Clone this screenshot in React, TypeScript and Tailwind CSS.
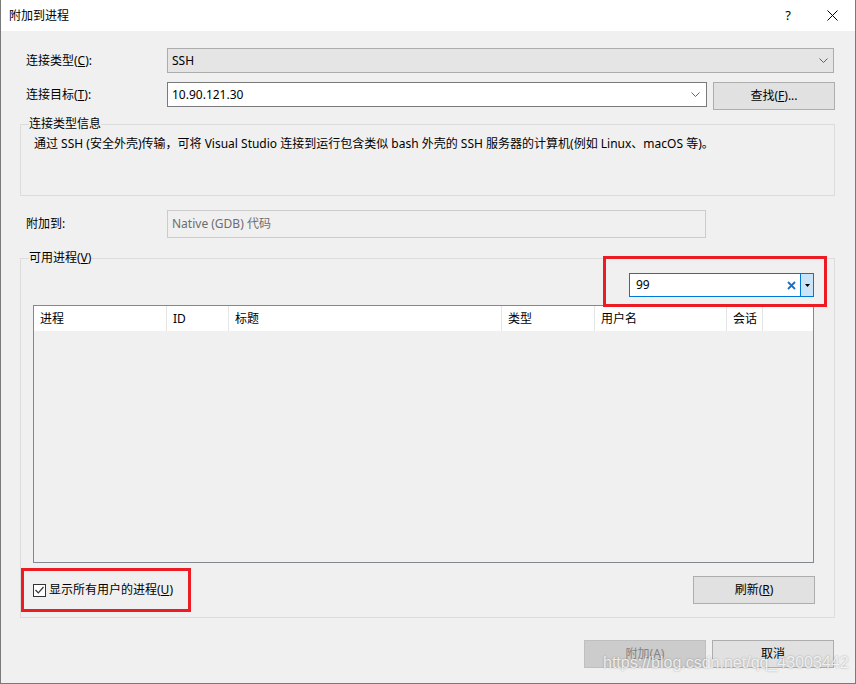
import React from "react"

const font = "font-['Noto_Sans','Noto_Sans_CJK_SC',sans-serif]"

function Chevron() {
    return (
        <svg width="9" height="5" viewBox="0 0 9 5" className="shrink-0">
            <path d="M0.5 0.5 L4.5 4.5 L8.5 0.5" fill="none" stroke="#606060" strokeWidth="1" />
        </svg>
    )
}

function Btn({ children, disabled }: { children: React.ReactNode; disabled?: boolean }) {
    return (
        <div
            className={
                disabled
                    ? "w-[122px] h-[28px] flex items-center justify-center border border-[#bfbfbf] bg-[#cccccc] text-[#838383]"
                    : "w-[122px] h-[28px] flex items-center justify-center border border-[#adadad] bg-[#e1e1e1] text-black"
            }
        >
            {children}
        </div>
    )
}

function GroupBox({ label, className, children }: { label: React.ReactNode; className: string; children?: React.ReactNode }) {
    return (
        <div className={"relative border border-[#dcdcdc] " + className}>
            <span className="absolute -top-[10px] left-[8px] bg-[#f0f0f0] leading-[18px]">{label}</span>
            {children}
        </div>
    )
}

const columns = [
    { name: "进程", w: "w-[133px]" },
    { name: "ID", w: "w-[62px]" },
    { name: "标题", w: "w-[273px]" },
    { name: "类型", w: "w-[93px]" },
    { name: "用户名", w: "w-[132px]" },
    { name: "会话", w: "w-[36px]" },
]

export default function App() {
    return (
        <div className={"relative w-[856px] h-[684px] bg-[#f0f0f0] border-x border-b border-[#7a7a7a] flex flex-col text-[12px] text-black " + font}>
            {/* Title bar */}
            <div className="h-[31px] bg-white flex items-center pl-[8px] shrink-0">
                <span className="flex-1">附加到进程</span>
                <span className="text-[13px] mr-[36px]">?</span>
                <svg width="11" height="11" viewBox="0 0 11 11" className="mr-[17px]">
                    <path d="M0.5 0.5 L10.5 10.5 M10.5 0.5 L0.5 10.5" stroke="#000" strokeWidth="1" />
                </svg>
            </div>

            {/* Connection type */}
            <div className="flex items-center mt-[17px]">
                <div className="w-[166px] pl-[25px]">
                    连接类型(<span className="underline">C</span>):
                </div>
                <div className="w-[667px] h-[25px] border border-[#acacac] bg-[#e5e5e5] flex items-center pl-[4px] pr-[5px]">
                    <span className="flex-1">SSH</span>
                    <Chevron />
                </div>
            </div>

            {/* Connection target */}
            <div className="flex items-start mt-[9px]">
                <div className="w-[166px] pl-[25px] h-[25px] flex items-center">
                    <span>
                        连接目标(<span className="underline">T</span>):
                    </span>
                </div>
                <div className="w-[540px] h-[25px] border border-[#7a7a7a] bg-white flex items-center pl-[4px] pr-[6px]">
                    <span className="flex-1">10.90.121.30</span>
                    <Chevron />
                </div>
                <div className="ml-[6px]">
                    <Btn>
                        查找(<span className="underline">F</span>)...
                    </Btn>
                </div>
            </div>

            {/* Connection type info */}
            <GroupBox label="连接类型信息" className="ml-[19px] mt-[14px] w-[815px] h-[72px]">
                <p className="pl-[13px] pt-[10px]">
                    通过 SSH (安全外壳)传输，可将 Visual Studio 连接到运行包含类似 bash 外壳的 SSH 服务器的计算机(例如 Linux、macOS 等)。
                </p>
            </GroupBox>

            {/* Attach to */}
            <div className="flex items-center mt-[14px]">
                <div className="w-[166px] pl-[25px]">附加到:</div>
                <div className="w-[539px] h-[28px] border border-[#cccccc] flex items-center pl-[4px] text-[#6d6d6d]">
                    Native (GDB) 代码
                </div>
            </div>

            {/* Available processes */}
            <GroupBox
                label={
                    <>
                        可用进程(<span className="underline">V</span>)
                    </>
                }
                className="ml-[19px] mt-[20px] w-[815px] h-[360px] flex flex-col pl-[12px] pr-[20px]"
            >
                <div className="flex justify-end mt-[14px]">
                    <div className="w-[185px] h-[24px] border border-[#0078d7] bg-white flex items-center">
                        <span className="flex-1 pl-[6px]">99</span>
                        <svg width="9" height="9" viewBox="0 0 9 9" className="mr-[4px]">
                            <path d="M1 1 L8 8 M8 1 L1 8" stroke="#1c6fc2" strokeWidth="1.8" />
                        </svg>
                        <div className="w-[13px] h-full bg-[#cce4f7] border-l border-[#0078d7] flex items-center justify-center">
                            <svg width="5" height="3" viewBox="0 0 5 3">
                                <path d="M0 0 L5 0 L2.5 3 Z" fill="#000" />
                            </svg>
                        </div>
                    </div>
                </div>

                <div className="mt-[8px] w-[781px] h-[258px] border border-[#828790] bg-[#f0f0f0] flex flex-col">
                    <div className="h-[25px] bg-white flex">
                        {columns.map((c) => (
                            <div key={c.name} className={c.w + " h-full border-r border-[#e5e5e5] flex items-center pl-[6px]"}>
                                {c.name}
                            </div>
                        ))}
                    </div>
                </div>

                <div className="flex items-center justify-between mt-[13px] pr-[-1px]">
                    <div className="flex items-center">
                        <div className="w-[13px] h-[13px] border border-[#333333] bg-white flex items-center justify-center">
                            <svg width="9" height="8" viewBox="0 0 9 8">
                                <path d="M0.5 4 L3.3 6.8 L8.5 1" fill="none" stroke="#333" strokeWidth="1.2" />
                            </svg>
                        </div>
                        <span className="ml-[3px]">
                            显示所有用户的进程(<span className="underline">U</span>)
                        </span>
                    </div>
                    <div className="-mr-[1px]">
                        <Btn>
                            刷新(<span className="underline">R</span>)
                        </Btn>
                    </div>
                </div>
            </GroupBox>

            {/* Bottom buttons */}
            <div className="flex justify-end gap-[6px] mt-[22px] pr-[21px]">
                <Btn disabled>
                    附加(<span className="underline">A</span>)
                </Btn>
                <Btn>取消</Btn>
            </div>

            {/* Annotation boxes */}
            <div className="absolute left-[602px] top-[256px] w-[224px] h-[51px] border-[3px] border-[#ed1c24] pointer-events-none" />
            <div className="absolute left-[20px] top-[568px] w-[170px] h-[44px] border-[3px] border-[#ed1c24] pointer-events-none" />

            {/* Watermark */}
            <div className="absolute left-[602px] top-[651px] font-['Liberation_Sans',sans-serif] text-[16px] text-white/80 [text-shadow:0_0_2px_rgba(0,0,0,0.35)] pointer-events-none">
                https://blog.csdn.net/qq_43003442
            </div>
        </div>
    )
}
